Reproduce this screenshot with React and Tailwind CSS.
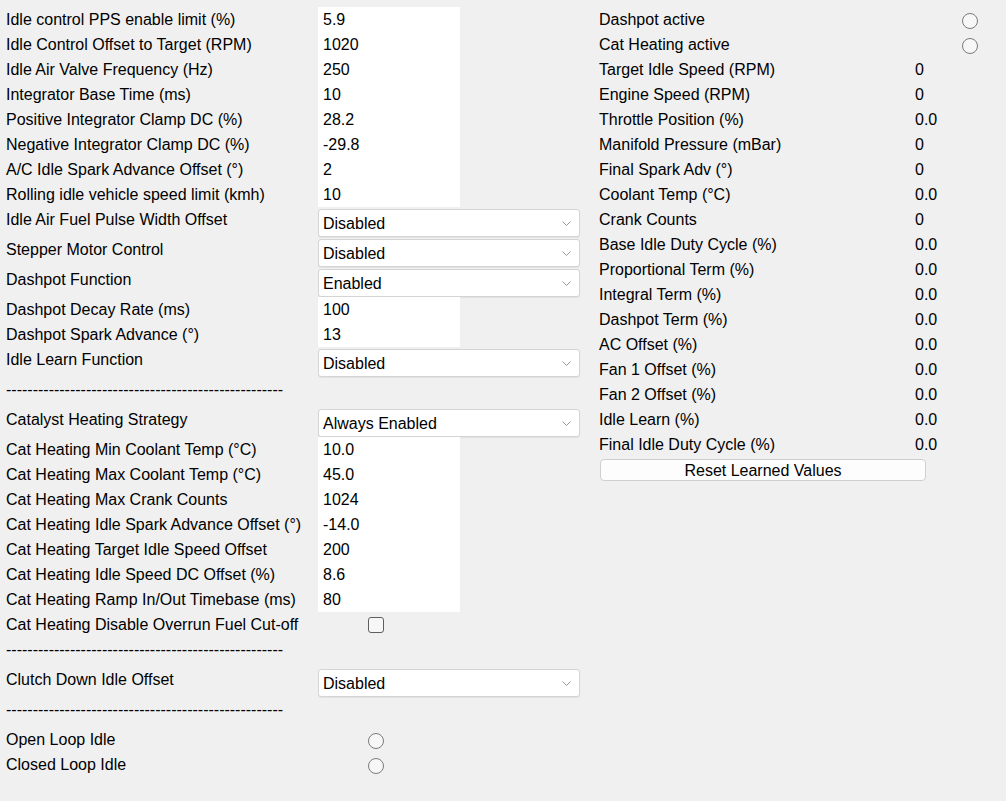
const leftRows = [
  { type: 'input', label: 'Idle control PPS enable limit (%)', value: '5.9' },
  { type: 'input', label: 'Idle Control Offset to Target (RPM)', value: '1020' },
  { type: 'input', label: 'Idle Air Valve Frequency (Hz)', value: '250' },
  { type: 'input', label: 'Integrator Base Time (ms)', value: '10' },
  { type: 'input', label: 'Positive Integrator Clamp DC (%)', value: '28.2' },
  { type: 'input', label: 'Negative Integrator Clamp DC (%)', value: '-29.8' },
  { type: 'input', label: 'A/C Idle Spark Advance Offset (°)', value: '2' },
  { type: 'input', label: 'Rolling idle vehicle speed limit (kmh)', value: '10' },
  { type: 'select', label: 'Idle Air Fuel Pulse Width Offset', value: 'Disabled' },
  { type: 'select', label: 'Stepper Motor Control', value: 'Disabled' },
  { type: 'select', label: 'Dashpot Function', value: 'Enabled' },
  { type: 'input', label: 'Dashpot Decay Rate (ms)', value: '100' },
  { type: 'input', label: 'Dashpot Spark Advance (°)', value: '13' },
  { type: 'select', label: 'Idle Learn Function', value: 'Disabled' },
  { type: 'sep' },
  { type: 'select', label: 'Catalyst Heating Strategy', value: 'Always Enabled' },
  { type: 'input', label: 'Cat Heating Min Coolant Temp (°C)', value: '10.0' },
  { type: 'input', label: 'Cat Heating Max Coolant Temp (°C)', value: '45.0' },
  { type: 'input', label: 'Cat Heating Max Crank Counts', value: '1024' },
  { type: 'input', label: 'Cat Heating Idle Spark Advance Offset (°)', value: '-14.0' },
  { type: 'input', label: 'Cat Heating Target Idle Speed Offset', value: '200' },
  { type: 'input', label: 'Cat Heating Idle Speed DC Offset (%)', value: '8.6' },
  { type: 'input', label: 'Cat Heating Ramp In/Out Timebase (ms)', value: '80' },
  { type: 'check', label: 'Cat Heating Disable Overrun Fuel Cut-off' },
  { type: 'sep' },
  { type: 'select', label: 'Clutch Down Idle Offset', value: 'Disabled' },
  { type: 'sep' },
  { type: 'radio', label: 'Open Loop Idle' },
  { type: 'radio', label: 'Closed Loop Idle' },
];

const statusRows = [
  { label: 'Dashpot active', radio: true },
  { label: 'Cat Heating active', radio: true },
  { label: 'Target Idle Speed (RPM)', value: '0' },
  { label: 'Engine Speed (RPM)', value: '0' },
  { label: 'Throttle Position (%)', value: '0.0' },
  { label: 'Manifold Pressure (mBar)', value: '0' },
  { label: 'Final Spark Adv (°)', value: '0' },
  { label: 'Coolant Temp (°C)', value: '0.0' },
  { label: 'Crank Counts', value: '0' },
  { label: 'Base Idle Duty Cycle (%)', value: '0.0' },
  { label: 'Proportional Term (%)', value: '0.0' },
  { label: 'Integral Term (%)', value: '0.0' },
  { label: 'Dashpot Term (%)', value: '0.0' },
  { label: 'AC Offset (%)', value: '0.0' },
  { label: 'Fan 1 Offset (%)', value: '0.0' },
  { label: 'Fan 2 Offset (%)', value: '0.0' },
  { label: 'Idle Learn (%)', value: '0.0' },
  { label: 'Final Idle Duty Cycle (%)', value: '0.0' },
];

function Radio() {
  return <span className="block h-[16px] w-[16px] rounded-full border-[1.5px] border-[#7a7a7a] bg-[#f7f7f7]" />;
}

function Select({ value }) {
  return (
    <div className="mt-[2px] flex h-[28px] w-[262px] items-center justify-between rounded-[3px] border border-[#d4d4d4] bg-white pl-[4px] pr-[8px] shadow-[0_1px_1px_rgba(0,0,0,0.06)]">
      <span className="pt-[2px]">{value}</span>
      <svg width="9" height="5" viewBox="0 0 9 5" fill="none" stroke="#999" strokeWidth="1">
        <path d="M0.5 0.5 L4.5 4.5 L8.5 0.5" />
      </svg>
    </div>
  );
}

function LeftRow({ row }) {
  if (row.type === 'sep') {
    return (
      <div className="h-[30px] pt-[2px] leading-[22px]">
        {'-'.repeat(52)}
      </div>
    );
  }
  return (
    <div className={`flex ${row.type === 'select' ? 'h-[30px]' : 'h-[25px]'}`}>
      <div className="w-[312px] shrink-0 pt-[2px] leading-[22px]">{row.label}</div>
      {row.type === 'input' && (
        <div className="h-[25px] w-[142px] bg-white pl-[5px] pt-[2px] leading-[22px]">{row.value}</div>
      )}
      {row.type === 'select' && <Select value={row.value} />}
      {row.type === 'check' && (
        <div className="pl-[50px] pt-[5px]">
          <span className="block h-[16px] w-[16px] rounded-[3px] border-[1.5px] border-[#5f5f5f] bg-[#f7f7f7]" />
        </div>
      )}
      {row.type === 'radio' && (
        <div className="pl-[50px] pt-[6px]">
          <Radio />
        </div>
      )}
    </div>
  );
}

export default function App() {
  return (
    <div
      className="flex h-[801px] w-[1006px] bg-[#f0f0f0] pt-[7px] text-[16px] text-black"
      style={{ fontFamily: '"Liberation Sans", Arial, sans-serif' }}
    >
      <div className="w-[593px] shrink-0 pl-[6px]">
        {leftRows.map((row, i) => (
          <LeftRow key={i} row={row} />
        ))}
      </div>

      <div className="pl-[6px]">
        {statusRows.map((row) => (
          <div key={row.label} className="flex h-[25px]">
            <div className="w-[316px] shrink-0 pt-[2px] leading-[22px]">{row.label}</div>
            {row.radio ? (
              <div className="pl-[47px] pt-[6px]">
                <Radio />
              </div>
            ) : (
              <div className="pt-[2px] leading-[22px]">{row.value}</div>
            )}
          </div>
        ))}
        <button className="mt-[2px] ml-[1px] h-[22px] w-[326px] rounded-[4px] border border-[#cfcfcf] bg-[#fdfdfd] pt-[2px] text-[16px] leading-[18px]">
          Reset Learned Values
        </button>
      </div>
    </div>
  );
}
